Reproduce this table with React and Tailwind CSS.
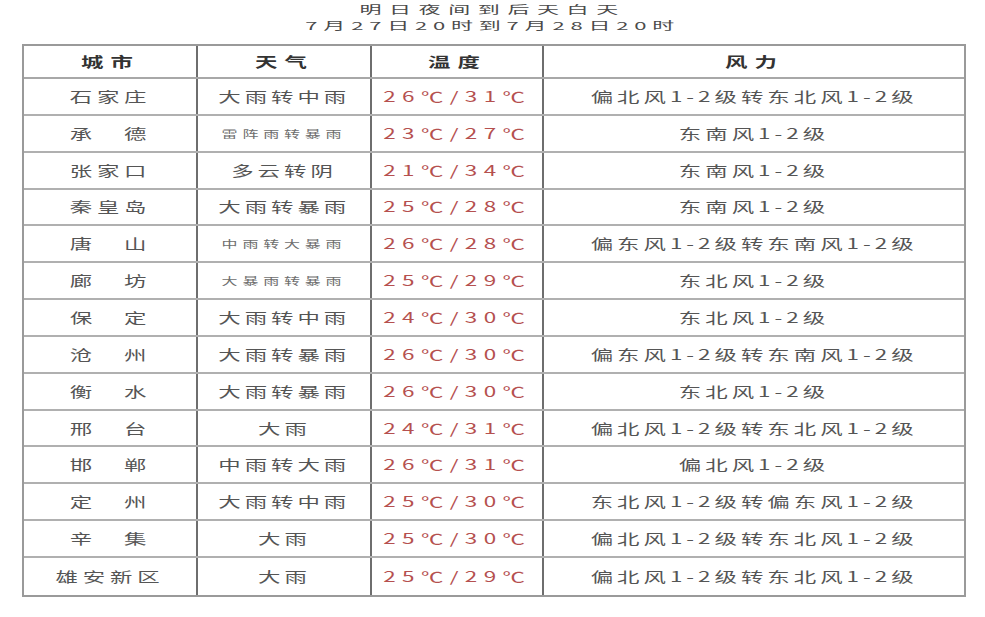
// App.jsx
const rows = [
  ["石家庄", "大雨转中雨", "26℃/31℃", "偏北风1-2级转东北风1-2级"],
  ["承　德", "雷阵雨转暴雨", "23℃/27℃", "东南风1-2级", true],
  ["张家口", "多云转阴", "21℃/34℃", "东南风1-2级"],
  ["秦皇岛", "大雨转暴雨", "25℃/28℃", "东南风1-2级"],
  ["唐　山", "中雨转大暴雨", "26℃/28℃", "偏东风1-2级转东南风1-2级", true],
  ["廊　坊", "大暴雨转暴雨", "25℃/29℃", "东北风1-2级", true],
  ["保　定", "大雨转中雨", "24℃/30℃", "东北风1-2级"],
  ["沧　州", "大雨转暴雨", "26℃/30℃", "偏东风1-2级转东南风1-2级"],
  ["衡　水", "大雨转暴雨", "26℃/30℃", "东北风1-2级"],
  ["邢　台", "大雨", "24℃/31℃", "偏北风1-2级转东北风1-2级"],
  ["邯　郸", "中雨转大雨", "26℃/31℃", "偏北风1-2级"],
  ["定　州", "大雨转中雨", "25℃/30℃", "东北风1-2级转偏东风1-2级"],
  ["辛　集", "大雨", "25℃/30℃", "偏北风1-2级转东北风1-2级"],
  ["雄安新区", "大雨", "25℃/29℃", "偏北风1-2级转东北风1-2级"],
];

// the source picture is stretched sideways, so text is widened with scale-x
function Txt({ children, className = "" }) {
  return (
    <span className={`inline-block scale-x-[1.6] whitespace-nowrap ${className}`}>
      {children}
    </span>
  );
}

function Cell({ children, first }) {
  return (
    <div
      className={`flex items-center justify-center ${
        first ? "" : "border-l-2 border-[#6e6e6e]"
      }`}
    >
      {children}
    </div>
  );
}

export default function App() {
  return (
    <div
      className="w-[985px] h-[617px] bg-white overflow-hidden"
      style={{ fontFamily: '"Noto Sans CJK SC", "Noto Sans", sans-serif' }}
    >
      {/* title */}
      <div className="flex flex-col items-center pt-[1px] h-[44px] text-[#4a4a4a]">
        <Txt className="text-[11px] leading-[16px] tracking-[3.8px] scale-x-[2]">
          明日夜间到后天白天
        </Txt>
        <Txt className="text-[11px] leading-[16px] tracking-[2.9px] scale-x-[2]">
          7月27日20时到7月28日20时
        </Txt>
      </div>

      {/* table */}
      <div className="ml-[22px] w-[944px] border-2 border-[#9a9a9a]">
        <div className="grid grid-cols-[172px_174px_172px_1fr] h-[33px] border-b-2 border-[#a8a8a8]">
          <Cell first>
            <Txt className="text-[14px] font-bold tracking-[4.5px] text-[#333]">城市</Txt>
          </Cell>
          <Cell>
            <Txt className="text-[14px] font-bold tracking-[4.5px] text-[#333]">天气</Txt>
          </Cell>
          <Cell>
            <Txt className="text-[14px] font-bold tracking-[4.5px] text-[#333]">温度</Txt>
          </Cell>
          <Cell>
            <Txt className="text-[14px] font-bold tracking-[4.5px] text-[#333]">风力</Txt>
          </Cell>
        </div>

        {rows.map(([city, weather, temp, wind, small], i) => (
          <div
            key={i}
            className={`grid grid-cols-[172px_174px_172px_1fr] h-[36.85px] ${
              i < rows.length - 1 ? "border-b-2 border-[#b0b0b0]" : ""
            }`}
          >
            <Cell first>
              <Txt className="text-[14px] tracking-[3px] text-[#555]">{city}</Txt>
            </Cell>
            <Cell>
              {small ? (
                <Txt className="text-[10px] tracking-[3px] text-[#6e6e6e]">{weather}</Txt>
              ) : (
                <Txt className="text-[14px] tracking-[2.5px] text-[#555]">{weather}</Txt>
              )}
            </Cell>
            <Cell>
              <Txt className="text-[14px] tracking-[4px] text-[#b5504f]">{temp}</Txt>
            </Cell>
            <Cell>
              <Txt className="text-[14px] tracking-[2.5px] text-[#555]">{wind}</Txt>
            </Cell>
          </div>
        ))}
      </div>
    </div>
  );
}
